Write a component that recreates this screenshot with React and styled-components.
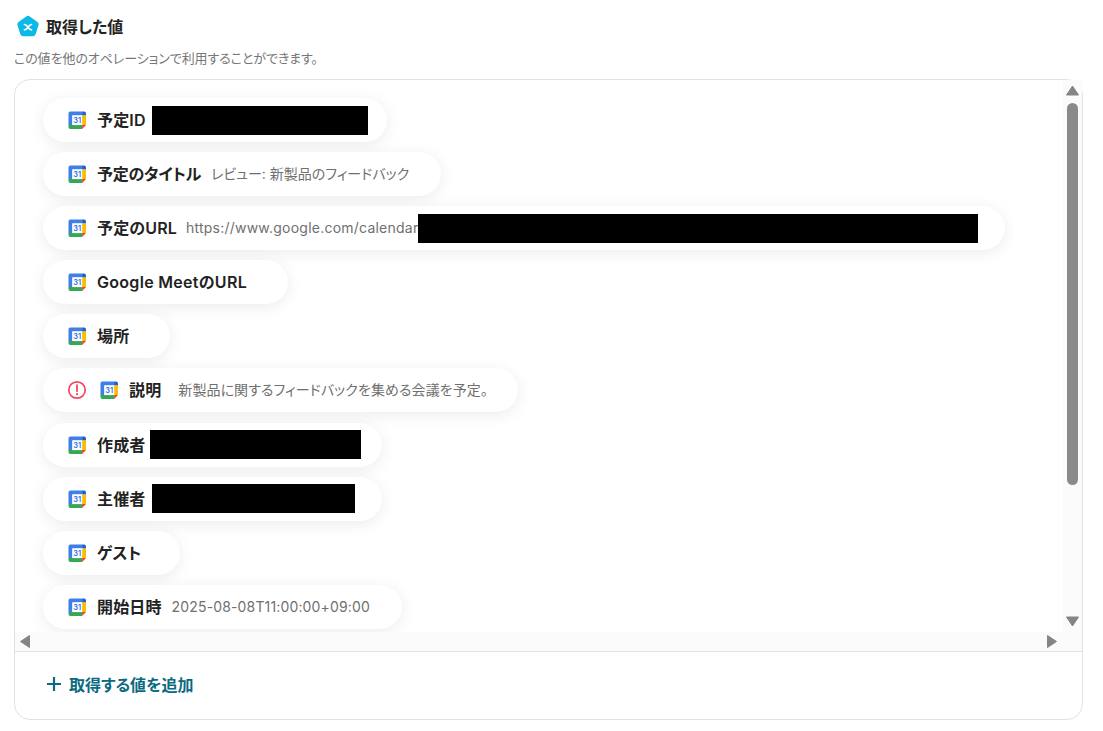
import React from "react";
import styled, { createGlobalStyle } from "styled-components";

const Global = createGlobalStyle`
  html, body { margin: 0; padding: 0; background: #fff; }
  body {
    font-family: Inter, "Noto Sans CJK JP", "Noto Sans", sans-serif; color: #222;
    font-feature-settings: "palt";
  }
`;
const Page = styled.div`
  width: 1103px; height: 731px; box-sizing: border-box; padding: 14px 20px 11px 14px; overflow: hidden;
  display: flex; flex-direction: column;
`;
const Heading = styled.div`
  display: flex; align-items: center; gap: 6px; height: 26px; padding-left: 2px;
`;
const HeadingText = styled.h2`
  margin: 0; font-size: 16px; font-weight: 600; line-height: 24px; color: #222; letter-spacing: 0;
`;
const Sub = styled.p`
  margin: 9px 0 12px; font-size: 13px; line-height: 18px; color: #777; letter-spacing: -.08px;
`;
const Card = styled.section`
  flex: 1; min-height: 0; display: flex; flex-direction: column; box-sizing: border-box;
  border: 1px solid #e2e2e2; border-radius: 16px;
`;
const Viewport = styled.div`
  height: 552px; display: flex; flex: none;
`;
const List = styled.div`
  flex: 1; min-width: 0; overflow: hidden; box-sizing: border-box; padding: 18px 0 0 28px;
  display: flex; flex-direction: column; gap: 10.1px; border-radius: 16px 0 0 0;
`;
const Pill = styled.div`
  flex: none; box-sizing: border-box; width: ${p => p.$w}px; height: 44px; border-radius: 22px; background: #fff;
  box-shadow: 0 3px 16px rgba(0,0,0,.08);
  display: flex; align-items: center; padding-left: ${p => p.$alert ? 24 : 25}px; white-space: nowrap;
`;
const Label = styled.span`
  margin-left: 11px; font-size: 16px; font-weight: 600; color: #222; line-height: 20px;
  letter-spacing: ${p => p.$ls ?? 0.15}px;
`;
const Value = styled.span`
  margin-left: ${p => p.$ml || 10}px; font-size: 14px; color: #6f6f6f; line-height: 20px;
  letter-spacing: ${p => p.$ls ?? 0.15}px;
`;
const Redacted = styled.span`
  display: block; flex: none; height: 29px; width: ${p => p.$w}px; background: #000; margin-left: ${p => p.$ml}px;
`;
const VBar = styled.div`
  flex: none; width: 19px; background: #fbfbfb; display: flex; flex-direction: column; align-items: center;
  padding-top: 5px; box-sizing: border-box;
`;
const VThumb = styled.div`
  width: 11px; height: 382px; margin-top: 7px; margin-bottom: 131px; border-radius: 6px; background: #8a8a8a; flex: none;
`;
const HBar = styled.div`
  flex: none; height: 19px; background: #fbfbfb; display: flex; align-items: center; justify-content: space-between;
  padding: 0 25px 0 5px; border-bottom: 1px solid #e2e2e2;
`;
const Footer = styled.div`
  flex: 1; display: flex; align-items: center; padding: 0 0 3px 31px;
`;
const AddButton = styled.button`
  border: 0; background: none; padding: 0; display: flex; align-items: center; gap: 7px; cursor: pointer;
  font: 600 16px Inter, "Noto Sans CJK JP", sans-serif; font-feature-settings: "palt"; color: #0a6a82; letter-spacing: 0;
`;

const Cal = () => (
  <svg width="18" height="18" viewBox="-0.5 -0.5 18.5 18.5" style={{ flex: "none" }}>
    <path d="M2 0h12v4H4v10H0V2a2 2 0 0 1 2-2z" fill="#3f7fe8" />
    <path d="M14 0h2a2 2 0 0 1 2 2v2h-4z" fill="#1d5fd1" />
    <rect x="14" y="4" width="4" height="10" fill="#fbbc04" />
    <path d="M0 14h14v4H2a2 2 0 0 1-2-2z" fill="#34a853" />
    <path d="M14 14h4l-4 4z" fill="#ea4335" />
    <rect x="4" y="4" width="10" height="10" fill="#fff" />
    <text x="9" y="12" fontSize="7.5" fontWeight="700" textAnchor="middle" fill="#3f7fe8" fontFamily="Inter, sans-serif">31</text>
  </svg>
);
const Logo = () => (
  <svg width="24" height="24" viewBox="0 0 24 24" style={{ flex: "none" }}>
    <path d="M10.2 1.4a3 3 0 0 1 3.6 0l7.6 5.5a3 3 0 0 1 1.1 3.4l-2.9 8.9a3 3 0 0 1-2.9 2.1H7.3a3 3 0 0 1-2.9-2.1l-2.9-8.9a3 3 0 0 1 1.1-3.4z" fill="#0cb8e6" />
    <path d="M8.5 9.5c2 .3 2.5 1.4 3.5 2.7s1.6 2.4 3.5 2.7M15.5 9.5c-2 .3-2.5 1.4-3.5 2.7s-1.6 2.4-3.5 2.7" fill="none" stroke="#fff" strokeWidth="1.7" strokeLinecap="round" />
  </svg>
);
const Alert = () => (
  <svg width="20" height="20" viewBox="0 0 20 20" style={{ flex: "none", marginRight: 13 }}>
    <circle cx="10" cy="10" r="8.2" fill="none" stroke="#f4475f" strokeWidth="1.7" />
    <path d="M10 5.2v6" stroke="#f4475f" strokeWidth="1.8" strokeLinecap="round" />
    <circle cx="10" cy="14.2" r="1.1" fill="#f4475f" />
  </svg>
);
const Arrow = ({ d }) => {
  if (d === "left" || d === "right") {
    return (
      <svg width="10" height="13" viewBox="0 0 10 13">
        <path d={d === "left" ? "M9.5 .5V12.5L.5 6.5Z" : "M.5 .5V12.5L9.5 6.5Z"} fill="#858585" stroke="#858585" strokeLinejoin="round" />
      </svg>
    );
  }
  return (
    <svg width="13" height="11" viewBox="0 0 13 11" style={{ flex: "none" }}>
      <path d={d === "up" ? "M6.5 1 L12.5 10 H.5 Z" : "M.5 1 H12.5 L6.5 10 Z"} fill="#858585" stroke="#858585" strokeLinejoin="round" />
    </svg>
  );
};

export default function App() {
  return (
    <Page>
      <Global />
      <Heading><Logo /><HeadingText>取得した値</HeadingText></Heading>
      <Sub>この値を他のオペレーションで利用することができます。</Sub>
      <Card>
        <Viewport>
          <List>
            <Pill $w={344}><Cal /><Label>予定ID</Label><Redacted $w={216} $ml={6} /></Pill>
            <Pill $w={398}><Cal /><Label $ls={-0.25}>予定のタイトル</Label><Value $ls={0}>レビュー: 新製品のフィードバック</Value></Pill>
            <Pill $w={962}><Cal /><Label>予定のURL</Label><Value $ml={9} $ls={0.23}>https://www.google.com/calendar</Value><Redacted $w={560} $ml={0} /></Pill>
            <Pill $w={245}><Cal /><Label $ls={0.3}>Google MeetのURL</Label></Pill>
            <Pill $w={127}><Cal /><Label>場所</Label></Pill>
            <Pill $w={475} $alert><Alert /><Cal /><Label>説明</Label><Value $ml={17} $ls={0.07}>新製品に関するフィードバックを集める会議を予定。</Value></Pill>
            <Pill $w={339}><Cal /><Label>作成者</Label><Redacted $w={211} $ml={5} /></Pill>
            <Pill $w={339}><Cal /><Label>主催者</Label><Redacted $w={203} $ml={7} /></Pill>
            <Pill $w={137}><Cal /><Label>ゲスト</Label></Pill>
            <Pill $w={359}><Cal /><Label>開始日時</Label><Value>2025-08-08T11:00:00+09:00</Value></Pill>
          </List>
          <VBar>
            <Arrow d="up" />
            <VThumb />
            <Arrow d="down" />
          </VBar>
        </Viewport>
        <HBar><Arrow d="left" /><Arrow d="right" /></HBar>
        <Footer>
          <AddButton>
            <svg width="16" height="16" viewBox="0 0 16 16"><path d="M8 1v14M1 8h14" stroke="#0a6a82" strokeWidth="2.2" /></svg>
            取得する値を追加
          </AddButton>
        </Footer>
      </Card>
    </Page>
  );
}
